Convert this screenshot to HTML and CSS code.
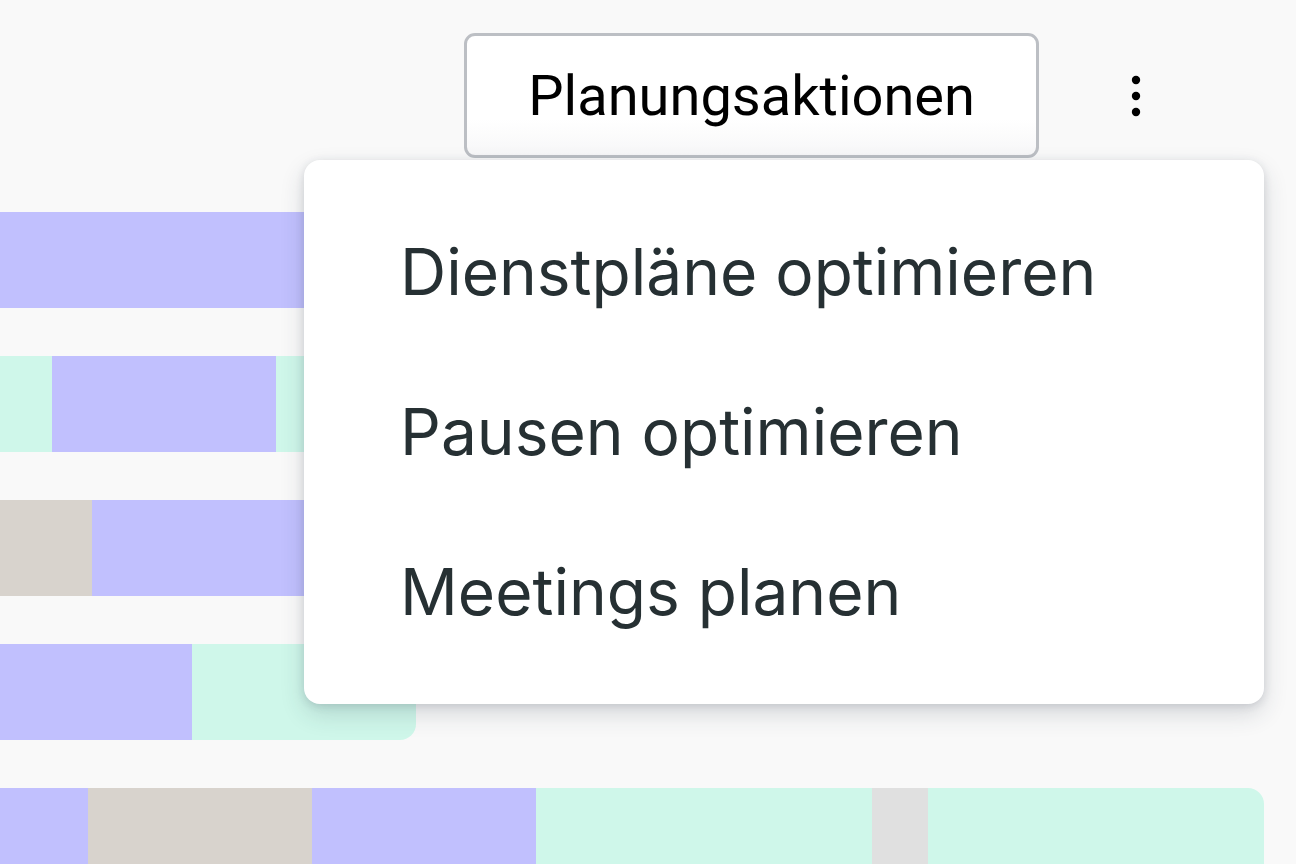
FILE: index.html
```html
<!DOCTYPE html>
<html lang="de">
<head>
<meta charset="utf-8">
<title>Planung</title>
<link rel="stylesheet" href="styles.css">
</head>
<body>
<div class="page">
  <header class="toolbar">
    <button class="action-btn" type="button">Planungsaktionen</button>
    <button class="kebab" type="button" aria-label="Mehr">
      <svg width="16" height="48" viewBox="0 0 16 48" aria-hidden="true">
        <circle cx="8" cy="8" r="4.2"/>
        <circle cx="8" cy="24" r="4.2"/>
        <circle cx="8" cy="40" r="4.2"/>
      </svg>
    </button>
  </header>

  <div class="timeline">
    <div class="row">
      <span class="seg work" style="width:800px"></span>
    </div>
    <div class="row">
      <span class="seg free" style="width:52px"></span>
      <span class="seg work" style="width:224px"></span>
      <span class="seg free" style="width:400px"></span>
    </div>
    <div class="row">
      <span class="seg pause" style="width:92px"></span>
      <span class="seg work" style="width:600px"></span>
    </div>
    <div class="row">
      <span class="seg work" style="width:192px"></span>
      <span class="seg free" style="width:224px"></span>
    </div>
    <div class="row">
      <span class="seg work" style="width:88px"></span>
      <span class="seg pause" style="width:224px"></span>
      <span class="seg work" style="width:224px"></span>
      <span class="seg free" style="width:336px"></span>
      <span class="seg gap" style="width:56px"></span>
      <span class="seg free" style="width:336px"></span>
    </div>
  </div>

  <ul class="menu">
    <li class="menu-item">Dienstpläne optimieren</li>
    <li class="menu-item">Pausen optimieren</li>
    <li class="menu-item">Meetings planen</li>
  </ul>
</div>
</body>
</html>
```

FILE: styles.css
```css
* {
  box-sizing: border-box;
}

html, body {
  margin: 0;
  padding: 0;
  background: #f9f9f9;
}

body {
  font-family: Inter, "Noto Sans", sans-serif;
  overflow: hidden;
}

.page {
  position: relative;
  width: 1296px;
  height: 864px;
  overflow: hidden;
}

.toolbar {
  display: flex;
  justify-content: flex-end;
  align-items: center;
  padding: 33px 128px 0 0;
}

.action-btn {
  height: 125px;
  padding: 0 61px;
  border: 3px solid #bcbfc4;
  border-radius: 11px;
  background: linear-gradient(#ffffff 0%, #ffffff 70%, #f7f7f8 100%);
  font-family: Roboto, "Liberation Sans", sans-serif;
  font-size: 56px;
  color: #000;
  line-height: 1;
}

.kebab {
  width: 64px;
  height: 64px;
  margin-left: 65px;
  padding: 0;
  border: 0;
  background: transparent;
  display: flex;
  align-items: center;
  justify-content: center;
}

.kebab svg {
  fill: #000;
  display: block;
}

.timeline {
  margin-top: 54px;
  display: flex;
  flex-direction: column;
  gap: 48px;
}

.row {
  display: flex;
  height: 96px;
}

.seg {
  display: block;
  height: 100%;
  flex: none;
}

.row > .seg:last-child {
  border-radius: 0 16px 16px 0;
}

.work {
  background: #c1c0fe;
}

.free {
  background: #cff7ea;
}

.pause {
  background: #d8d3cd;
}

.gap {
  background: #e0e0e0;
}

.menu {
  position: absolute;
  left: 304px;
  top: 160px;
  width: 960px;
  margin: 0;
  padding: 32px 0;
  list-style: none;
  background: #fff;
  border-radius: 16px;
  box-shadow: 0 10px 24px rgba(40, 50, 70, 0.16), 0 2px 8px rgba(40, 50, 70, 0.14);
}

.menu-item {
  height: 160px;
  line-height: 160px;
  padding: 0 96px;
  font-size: 64px;
  color: #263033;
  white-space: nowrap;
}
```
